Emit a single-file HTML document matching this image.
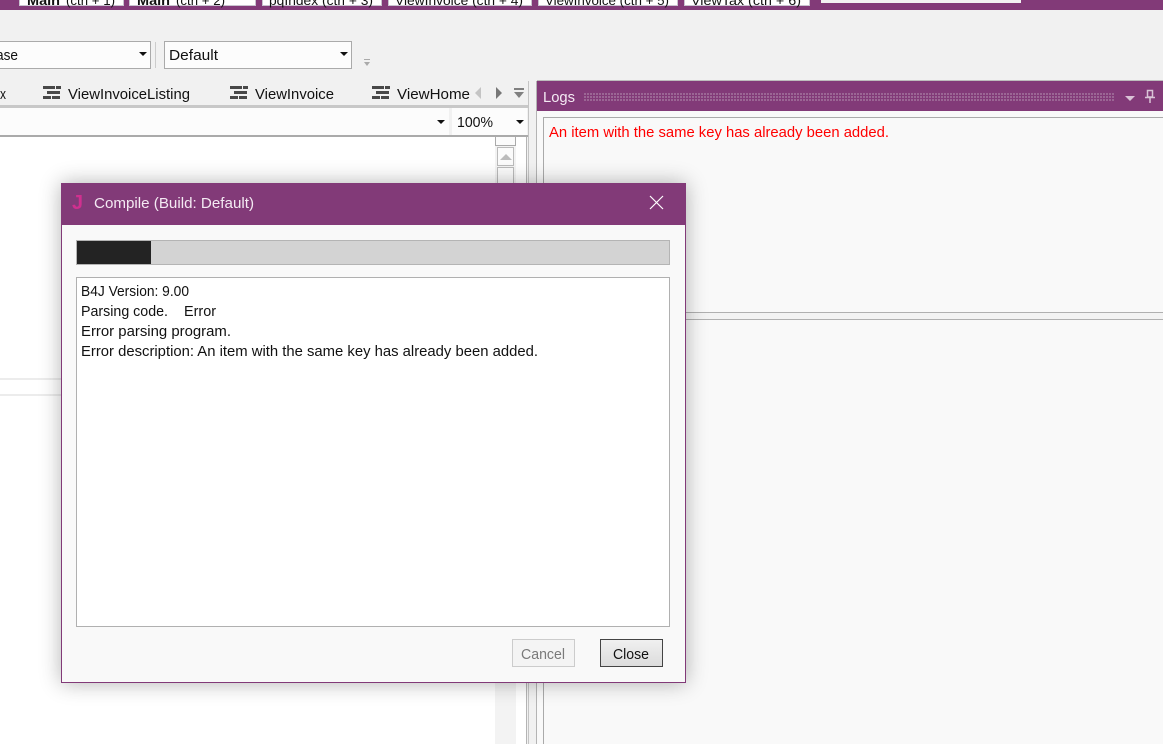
<!DOCTYPE html>
<html><head><meta charset="utf-8"><style>
html,body{margin:0;padding:0}
body{width:1163px;height:744px;overflow:hidden;background:#f1f1f1;position:relative;font-family:"Liberation Sans",sans-serif}
.a{position:absolute;box-sizing:border-box}
svg{position:absolute;left:0;top:0}
text{font-family:"Liberation Sans",sans-serif}
</style></head><body>
<!-- top bar -->
<div class="a" style="left:0;top:0;width:1163px;height:10px;background:#823a78"></div>
<div class="a" style="left:19px;top:0;width:105px;height:6px;background:#fff;border:1px solid #c9c3cf;border-top:0"></div>
<div class="a" style="left:129px;top:0;width:127px;height:6px;background:#fff;border:1px solid #c9c3cf;border-top:0"></div>
<div class="a" style="left:262px;top:0;width:120px;height:6px;background:#fff;border:1px solid #c9c3cf;border-top:0"></div>
<div class="a" style="left:388px;top:0;width:144px;height:6px;background:#fff;border:1px solid #c9c3cf;border-top:0"></div>
<div class="a" style="left:538px;top:0;width:140px;height:6px;background:#fff;border:1px solid #c9c3cf;border-top:0"></div>
<div class="a" style="left:684px;top:0;width:126px;height:6px;background:#fff;border:1px solid #c9c3cf;border-top:0"></div>
<div class="a" style="left:821px;top:0;width:200px;height:3px;background:#f2f2f2"></div>
<!-- toolbar combos -->
<div class="a" style="left:-2px;top:41px;width:153px;height:28px;background:#fcfcfc;border:1px solid #aaa"></div>
<div class="a" style="left:155px;top:42px;width:1px;height:26px;background:#ccc"></div>
<div class="a" style="left:164px;top:41px;width:188px;height:28px;background:#fcfcfc;border:1px solid #aaa"></div>
<!-- left panel -->
<div class="a" style="left:0;top:105px;width:528px;height:3px;background:#c8c8c8"></div>
<div class="a" style="left:0;top:108px;width:449px;height:27px;background:#fcfcfc"></div>
<div class="a" style="left:452px;top:108px;width:75px;height:27px;background:#fcfcfc"></div>
<div class="a" style="left:449px;top:108px;width:3px;height:28px;background:#f1f1f1"></div>
<div class="a" style="left:0;top:135px;width:528px;height:2px;background:#aaa"></div>
<div class="a" style="left:0;top:137px;width:495px;height:607px;background:#fff"></div>
<div class="a" style="left:0;top:378px;width:495px;height:2px;background:#ececec"></div>
<div class="a" style="left:0;top:394px;width:495px;height:2px;background:#ececec"></div>
<div class="a" style="left:495px;top:137px;width:21px;height:607px;background:#f3f3f3"></div>
<div class="a" style="left:516px;top:137px;width:10px;height:607px;background:#fff"></div>
<div class="a" style="left:495px;top:137px;width:21px;height:9px;background:#fbfbfb;border:1px solid #aaa;border-top:0"></div>
<div class="a" style="left:497px;top:147px;width:17px;height:19px;background:#fbfbfb;border:1px solid #bbb"></div>
<div class="a" style="left:497px;top:167px;width:17px;height:30px;background:#fbfbfb;border:1px solid #bbb"></div>
<div class="a" style="left:526px;top:137px;width:1px;height:607px;background:#b4b4b4"></div>
<div class="a" style="left:528px;top:81px;width:1px;height:663px;background:#c4c4c4"></div>
<div class="a" style="left:536px;top:81px;width:1px;height:663px;background:#b4b4b4"></div>
<!-- logs panel -->
<div class="a" style="left:537px;top:80px;width:626px;height:1px;background:#bdbdbd"></div>
<div class="a" style="left:537px;top:81px;width:626px;height:30px;background:#823a78"></div>
<div class="a" style="left:537px;top:111px;width:626px;height:633px;background:#f9f9f9"></div>
<div class="a" style="left:543px;top:117px;width:620px;height:1px;background:#aaa"></div>
<div class="a" style="left:543px;top:117px;width:1px;height:627px;background:#aaa"></div>
<div class="a" style="left:537px;top:312px;width:626px;height:1px;background:#b0b0b0"></div>
<div class="a" style="left:537px;top:319px;width:626px;height:1px;background:#b0b0b0"></div>
<div class="a" style="left:537px;top:313px;width:626px;height:6px;background:#f3f3f3"></div>
<div class="a" style="left:584px;top:93px;width:530px;height:8px;background-image:radial-gradient(circle at 1px 1px,#9d6a97 1px,transparent 1.2px);background-size:3px 3px"></div>
<svg width="1163" height="744" viewBox="0 0 1163 744">
<g font-size="13" fill="#111">
<text x="27" y="5" font-weight="bold" textLength="33" lengthAdjust="spacingAndGlyphs">Main</text>
<text x="66" y="5" textLength="49" lengthAdjust="spacingAndGlyphs">(ctrl + 1)</text>
<text x="137" y="5" font-weight="bold" textLength="33" lengthAdjust="spacingAndGlyphs">Main</text>
<text x="176" y="5" textLength="49" lengthAdjust="spacingAndGlyphs">(ctrl + 2)</text>
<text x="269" y="5" textLength="104" lengthAdjust="spacingAndGlyphs">pqIndex  (ctrl + 3)</text>
<text x="395" y="5" textLength="128" lengthAdjust="spacingAndGlyphs">ViewInvoice  (ctrl + 4)</text>
<text x="545" y="5" textLength="124" lengthAdjust="spacingAndGlyphs">ViewInvoice  (ctrl + 5)</text>
<text x="691" y="5" textLength="110" lengthAdjust="spacingAndGlyphs">ViewTax  (ctrl + 6)</text>
</g>
<g font-size="15" fill="#111">
<text x="-4" y="60" textLength="22" lengthAdjust="spacingAndGlyphs">ase</text>
<text x="169" y="60" textLength="49" lengthAdjust="spacingAndGlyphs">Default</text>
<text x="0" y="99" textLength="6" lengthAdjust="spacingAndGlyphs">x</text>
<text x="68" y="99" textLength="122" lengthAdjust="spacingAndGlyphs">ViewInvoiceListing</text>
<text x="255" y="99" textLength="79" lengthAdjust="spacingAndGlyphs">ViewInvoice</text>
<text x="397" y="99" textLength="73" lengthAdjust="spacingAndGlyphs">ViewHome</text>
<text x="457" y="127" textLength="36" lengthAdjust="spacingAndGlyphs">100%</text>
</g>
<g fill="#111">
<path d="M139 52h8l-4 4z"/><path d="M340 52h8l-4 4z"/><path d="M437 120h8l-4 4z"/><path d="M516 120h8l-4 4z"/>
</g>
<g fill="#aaa"><path d="M364 59h6v1h-6zM364 62h6l-3 4z"/></g>
<path d="M500 160l6-6 6 6z" fill="#bbb"/>
<g fill="#484848">
<path d="M43 86h12v3h-12zM56 86h5v3h-5zM47 91h13v3h-13zM43 96h8v3h-8zM52 96h8v3h-8z"/>
<path d="M230 86h12v3h-12zM243 86h5v3h-5zM234 91h13v3h-13zM230 96h8v3h-8zM239 96h8v3h-8z"/>
<path d="M372 86h12v3h-12zM385 86h5v3h-5zM376 91h13v3h-13zM372 96h8v3h-8zM381 96h8v3h-8z"/>
</g>
<path d="M481 87v12l-6-6z" fill="#c4c4c4"/>
<path d="M496 87v12l6-6z" fill="#777"/>
<path d="M514 88h10v2h-10zM514 92h10l-5 6z" fill="#808080"/>
<text x="543" y="102" font-size="15" fill="#f4eaf3" textLength="32" lengthAdjust="spacingAndGlyphs">Logs</text>
<path d="M1125 96h10l-5 5z" fill="#d9c3d6"/>
<path d="M1147.5 90.500h5v6.500h-5zM1145 97.500h10M1150 98v5" fill="none" stroke="#d9c3d6" stroke-width="1.500"/>
<text x="549" y="137" font-size="15" fill="#ff0000" textLength="340" lengthAdjust="spacingAndGlyphs">An item with the same key has already been added.</text>
</svg>
<!-- dialog -->
<div class="a" style="left:61px;top:183px;width:625px;height:500px;background:#f9f9f9;border:1px solid #823a78;box-shadow:0 0 20px rgba(0,0,0,.3)"></div>
<div class="a" style="left:61px;top:183px;width:625px;height:42px;background:#823a78"></div>
<div class="a" style="left:76px;top:240px;width:594px;height:25px;background:#d3d3d3;border:1px solid #b4b4b4"></div>
<div class="a" style="left:77px;top:241px;width:74px;height:23px;background:#232323"></div>
<div class="a" style="left:76px;top:277px;width:594px;height:350px;background:#fff;border:1px solid #b0b0b0"></div>
<div class="a" style="left:512px;top:639px;width:63px;height:28px;background:#f4f4f4;border:1px solid #ccc"></div>
<div class="a" style="left:600px;top:639px;width:63px;height:28px;background:linear-gradient(#f0f0f0,#dcdcdc);border:1px solid #444"></div>
<svg width="1163" height="744" viewBox="0 0 1163 744">
<text x="72" y="209" font-size="20" font-weight="bold" fill="#d0308f" textLength="11" lengthAdjust="spacingAndGlyphs">J</text>
<text x="94" y="208" font-size="15" fill="#f4eaf3" textLength="160" lengthAdjust="spacingAndGlyphs">Compile (Build: Default)</text>
<path d="M650 196l13 13M663 196l-13 13" stroke="#fff" stroke-width="1.2" fill="none"/>
<g font-size="15" fill="#111">
<text x="81" y="296" textLength="108" lengthAdjust="spacingAndGlyphs">B4J Version: 9.00</text>
<text x="81" y="316" textLength="87" lengthAdjust="spacingAndGlyphs">Parsing code.</text>
<text x="184" y="316" textLength="32" lengthAdjust="spacingAndGlyphs">Error</text>
<text x="81" y="336" textLength="150" lengthAdjust="spacingAndGlyphs">Error parsing program.</text>
<text x="81" y="356" textLength="457" lengthAdjust="spacingAndGlyphs">Error description: An item with the same key has already been added.</text>
</g>
<text x="521" y="659" font-size="15" fill="#7a7a7a" textLength="44" lengthAdjust="spacingAndGlyphs">Cancel</text>
<text x="613" y="659" font-size="15" fill="#111" textLength="36" lengthAdjust="spacingAndGlyphs">Close</text>
</svg>
</body></html>
